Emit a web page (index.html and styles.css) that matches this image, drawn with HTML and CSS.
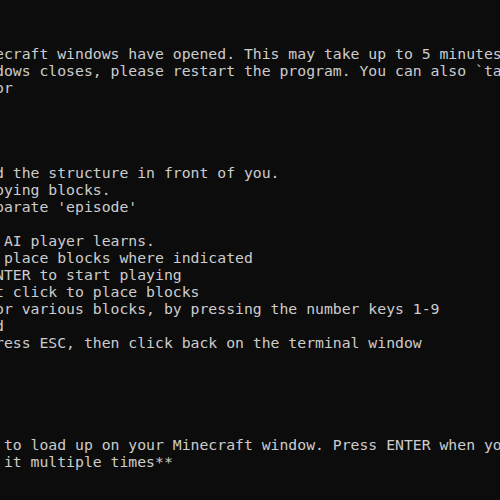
FILE: index.html
```html
<!DOCTYPE html>
<html>
<head>
<meta charset="utf-8">
<link rel="stylesheet" href="styles.css">
</head>
<body>
<pre class="term">ecraft windows have opened. This may take up to 5 minutes
dows closes, please restart the program. You can also `ta
or




d the structure in front of you.
pying blocks.
parate 'episode'

 AI player learns.
 place blocks where indicated
NTER to start playing
t click to place blocks
or various blocks, by pressing the number keys 1-9
d
ress ESC, then click back on the terminal window





 to load up on your Minecraft window. Press ENTER when yo
 it multiple times**</pre>
</body>
</html>
```
FILE: styles.css
```css
html, body {
  margin: 0;
  padding: 0;
  background: #0c0c0c;
  overflow: hidden;
  width: 500px;
  height: 500px;
}
.term {
  margin: 0 0 0 -5px;
  padding-top: 45px;
  font-family: "DejaVu Sans Mono", monospace;
  font-size: 14.78px;
  line-height: 17px;
  color: #cccccc;
  white-space: pre;
}
```
